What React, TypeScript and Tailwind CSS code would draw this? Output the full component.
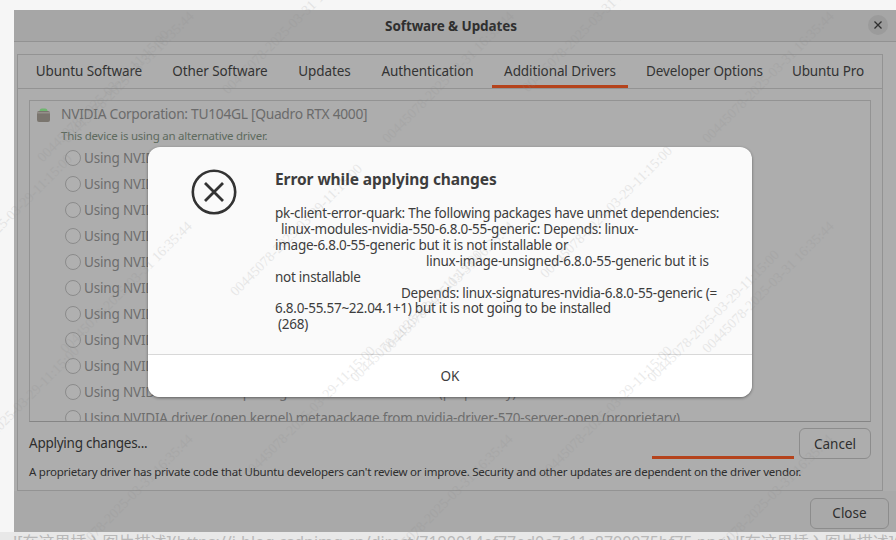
import { ReactElement } from "react";

const font = { fontFamily: '"Noto Sans", sans-serif' };
const cjkFont = { fontFamily: '"Noto Sans", "Noto Sans CJK SC", sans-serif' };
const markFont = { fontFamily: '"Liberation Serif", serif' };

const tabs = [
  { label: "Ubuntu Software", w: "w-[130px]" },
  { label: "Other Software", w: "w-[120px]" },
  { label: "Updates", w: "w-[77px]" },
  { label: "Authentication", w: "w-[117px]" },
  { label: "Additional Drivers", w: "w-[136px]", active: true },
  { label: "Developer Options", w: "w-[141px]" },
  { label: "Ubuntu Pro", w: "w-[94px]" },
];

const stampA = "00445078-2025-03-31 16:35:44";
const stampB = "00445078-2025-03-29-11:15:00";

// start point of each watermark, they run up and to the right
const marks = [
  { x: 65, y: 134, t: stampA },
  { x: 385, y: 134, t: stampA },
  { x: 705, y: 134, t: stampA },
  { x: 63, y: 344, t: stampA },
  { x: 385, y: 344, t: stampA },
  { x: 705, y: 344, t: stampA },
  { x: 64, y: 557, t: stampA },
  { x: 384, y: 557, t: stampA },
  { x: 704, y: 557, t: stampA },
  { x: 225, y: 85, t: stampA },
  { x: 525, y: 83, t: stampA },
  { x: 40, y: 153, t: stampB },
  { x: -57, y: 277, t: stampB },
  { x: 233, y: 287, t: stampB },
  { x: 543, y: 269, t: stampB },
  { x: 246, y: 469, t: stampB },
  { x: 543, y: 469, t: stampB },
  { x: -50, y: 469, t: stampB },
  { x: 353, y: 373, t: stampB },
  { x: 650, y: 373, t: stampB },
];

function DriverRow({ label }: { label: string }): ReactElement {
  return (
    <div className="flex h-[26px] shrink-0 items-center gap-[3px] pl-[35px]">
      <span className="h-[16px] w-[16px] shrink-0 rounded-full border border-[#8b8b8b] bg-[#b0b0b0]" />
      <span className="whitespace-nowrap text-[13.5px] tracking-[-0.18px] text-[#6d6d6d]">{label}</span>
    </div>
  );
}

function GpuIcon(): ReactElement {
  return (
    <svg width="15" height="14" viewBox="0 0 15 14" className="shrink-0">
      <path d="M3.5 3 Q3.5 0.5 6 0.5 H9 Q11.5 0.5 11.5 3 Z" fill="#6fb56f" />
      <path d="M1 4.5 Q1 3 3 3 H12 Q14 3 14 4.5 V12 Q14 14 12 14 H3 Q1 14 1 12 Z" fill="#7a756e" />
      <rect x="1" y="4" width="13" height="1.5" fill="#94908a" />
    </svg>
  );
}

function ErrorDialog(): ReactElement {
  return (
    <div className="absolute left-[148px] top-[147px] flex h-[250px] w-[604px] flex-col overflow-hidden rounded-[12px] bg-[#fafafa] shadow-[0_1px_3px_rgba(0,0,0,0.45)]">
      <div className="flex h-[208px] border-b border-[#d8d8d8]">
        <div className="w-[127px] shrink-0 pl-[43px] pt-[22px]">
          <svg width="46" height="46" viewBox="0 0 46 46" fill="none" stroke="#333333">
            <circle cx="23" cy="23" r="21.2" strokeWidth="2.6" />
            <path d="M14 14 L32 32 M32 14 L14 32" strokeWidth="2.8" />
          </svg>
        </div>
        <div className="pt-[21px] text-[#3d3d3d]">
          <div className="text-[15.5px] font-bold leading-[22px] tracking-[-0.08px]">Error while applying changes</div>
          <div className="mt-[16px] whitespace-pre text-[13.5px] leading-[15.9px] tracking-[-0.26px]">
            <div>pk-client-error-quark: The following packages have unmet dependencies:</div>
            <div className="pl-[6px]">linux-modules-nvidia-550-6.8.0-55-generic: Depends: linux-</div>
            <div>image-6.8.0-55-generic but it is not installable or</div>
            <div className="pl-[151px]">linux-image-unsigned-6.8.0-55-generic but it is</div>
            <div>not installable</div>
            <div className="pl-[126px]">Depends: linux-signatures-nvidia-6.8.0-55-generic (=</div>
            <div>6.8.0-55.57~22.04.1+1) but it is not going to be installed</div>
            <div className="pl-[3px]">(268)</div>
          </div>
        </div>
      </div>
      <div className="flex flex-1 items-center justify-center bg-white text-[13.5px] text-[#3d3d3d]">OK</div>
    </div>
  );
}

export default function App(): ReactElement {
  return (
    <div className="relative flex h-[540px] w-[896px] flex-col overflow-hidden bg-[#f6f6f6] pl-[14px] pt-[10px]" style={font}>
      <div className="flex h-[522px] shrink-0 flex-col rounded-tr-[10px] bg-[#adadad]">
        <div className="relative flex h-[32px] shrink-0 items-center justify-center border-b border-[#929292] bg-[#a6a6a6] pr-[8px] pt-[2px] text-[13.5px] font-bold tracking-[-0.1px] text-[#2f2f2f]">
          Software &amp; Updates
          <span className="absolute right-[8px] top-[5px] flex h-[20px] w-[20px] items-center justify-center rounded-full bg-[#9b9b9b]">
            <svg width="10" height="10" viewBox="0 0 10 10" stroke="#2f2f2f" strokeWidth="1.3">
              <path d="M1.5 1.5 L8.5 8.5 M8.5 1.5 L1.5 8.5" />
            </svg>
          </span>
        </div>

        <div className="ml-[3px] mt-[12px] flex h-[437px] w-[866px] shrink-0 flex-col border border-[#939393]">
          <div className="flex h-[34px] shrink-0 gap-[6px] border-b border-[#939393] pl-[6px]">
            {tabs.map((tab) => (
              <div
                key={tab.label}
                className={`flex items-center justify-center whitespace-nowrap text-[13.5px] tracking-[-0.1px] text-[#333333] ${tab.w} ${
                  tab.active ? "border-b-[3px] border-[#b5431c] pt-[3px]" : ""
                }`}
              >
                {tab.label}
              </div>
            ))}
          </div>

          <div className="flex flex-1 flex-col px-[11px] pt-[11px]">
            <div className="h-[322px] shrink-0 overflow-hidden border border-[#939393] border-b-[#858585]">
              <div className="flex h-[24px] items-center gap-[10px] pl-[6px] pt-[3px]">
                <GpuIcon />
                <span className="whitespace-nowrap text-[13.8px] tracking-[-0.3px] text-[#6b6b6b]">NVIDIA Corporation: TU104GL [Quadro RTX 4000]</span>
              </div>
              <div className="mt-[1px] pl-[31px] text-[11.5px] leading-[20px] tracking-[-0.24px] text-[#5d6a5d]">This device is using an alternative driver.</div>
              <div className="-mt-[1px] flex flex-col">
                {Array.from({ length: 10 }).map((_, i) => (
                  <DriverRow key={i} label="Using NVIDIA driver metapackage from nvidia-driver-570 (proprietary)" />
                ))}
                <DriverRow label="Using NVIDIA driver (open kernel) metapackage from nvidia-driver-570-server-open (proprietary)" />
              </div>
            </div>

            <div className="mt-[6px] flex h-[31px] shrink-0">
              <div className="flex-1 self-center text-[13.5px] tracking-[-0.25px] text-[#2e2e2e]">Applying changes...</div>
              <div className="mr-[5px] h-[3px] w-[142px] self-end bg-[#b5431c]" />
              <div className="flex w-[72px] items-center justify-center rounded-[6px] border border-[#8c8c8c] pt-[2px] text-[13.5px] text-[#2e2e2e]">Cancel</div>
            </div>
            <div className="mt-[4px] whitespace-nowrap text-[11.5px] leading-[18px] tracking-[-0.24px] text-[#2e2e2e]">
              A proprietary driver has private code that Ubuntu developers can't review or improve. Security and other updates are dependent on the driver vendor.
            </div>
          </div>
        </div>

        <div className="flex flex-1 justify-end bg-[#a9a9a9] pr-[7px] pt-[7px]">
          <div className="flex h-[31px] w-[79px] items-center justify-center rounded-[6px] border border-[#8c8c8c] text-[13.5px] text-[#2e2e2e]">Close</div>
        </div>
      </div>

      <div className="-ml-[14px] h-[8px] overflow-hidden whitespace-nowrap bg-[#e8e8e8] pl-[13px] text-[16px] leading-[20px] text-[#b8b8b8]" style={cjkFont}>
        ![在这里插入图片描述](https://i-blog.csdnimg.cn/direct/7190014ef77ed0c7c11c8700075bf75.png) ![在这里插入图片描述](https://
      </div>

      <ErrorDialog />

      {marks.map((m, i) => (
        <span
          key={i}
          className="pointer-events-none absolute origin-left -rotate-45 whitespace-nowrap text-[14px] leading-[14px] text-[#8a8a8a] opacity-[0.17]"
          style={{ ...markFont, left: m.x, top: m.y }}
        >
          {m.t}
        </span>
      ))}
    </div>
  );
}
